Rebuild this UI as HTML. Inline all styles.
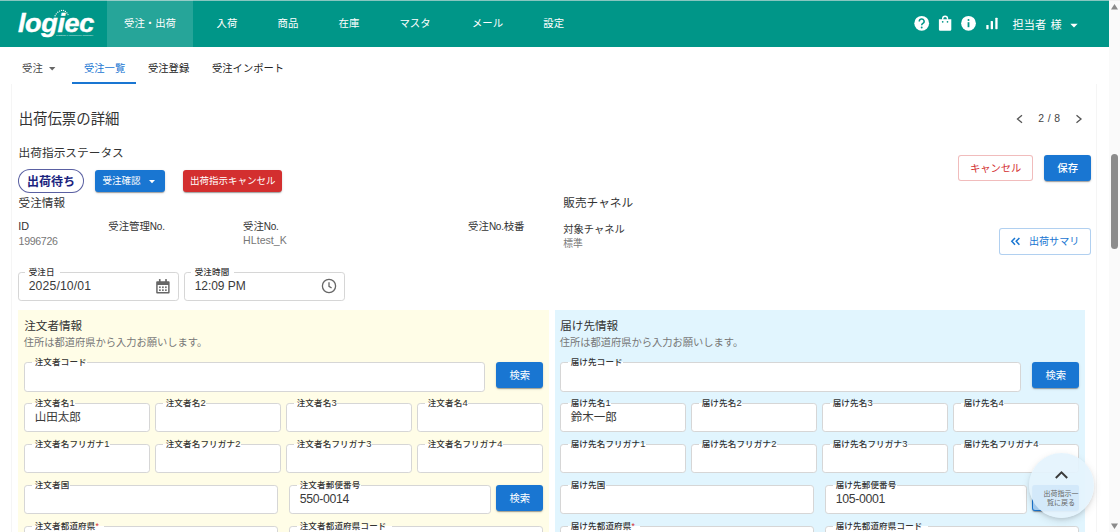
<!DOCTYPE html><html lang="ja"><head><meta charset="utf-8"><title>出荷伝票の詳細</title><style>
html,body{margin:0;padding:0;}
body{width:1120px;height:532px;overflow:hidden;position:relative;background:#fff;
 font-family:"Liberation Sans","Noto Sans CJK JP",sans-serif;color:#333;-webkit-font-smoothing:antialiased;}
.a{position:absolute;}
.t{position:absolute;white-space:nowrap;height:20px;line-height:20px;}
.c{text-align:center;}
.box{position:absolute;box-sizing:border-box;border:1px solid #d6d6d6;border-radius:3.2px;background:#fff;}
.lb{position:absolute;white-space:nowrap;height:12px;line-height:12px;font-size:8.5px;font-weight:500;color:#333;padding:0 .5px 0 2.5px;letter-spacing:.18px}
.btn{position:absolute;box-sizing:border-box;border-radius:3px;color:#fff;text-align:center;white-space:nowrap;font-weight:500;}
.blue{background:#1976d2;box-shadow:0 2px 1px -1px rgba(0,0,0,.2),0 1px 1px 0 rgba(0,0,0,.14),0 1px 3px 0 rgba(0,0,0,.12);}
.red{background:#d32f2f;box-shadow:0 2px 1px -1px rgba(0,0,0,.2),0 1px 1px 0 rgba(0,0,0,.14),0 1px 3px 0 rgba(0,0,0,.12);}
</style></head><body>
<div class="a" style="left:1109px;top:0;width:11px;height:532px;background:#fafafa"></div>
<div class="a" style="left:1111px;top:153.5px;width:7px;height:95.3px;border-radius:3.5px;background:#8c8c8c"></div>
<svg class="a" style="left:1109px;top:0" width="11" height="532"><path d="M2 9.5 L5.5 4 L9 9.5 Z" fill="#8a8a8a"/><path d="M2 523.5 L5.5 529 L9 523.5 Z" fill="#8a8a8a"/></svg>
<div class="a" style="left:0;top:0;width:1109px;height:47px;background:#009688"></div>
<div class="a" style="left:107px;top:0;width:86px;height:47px;background:rgba(255,255,255,.15)"></div>
<div class="a" style="left:0;top:0;width:1120px;height:1px;background:rgba(232,232,232,.58)"></div>
<div class="a" id="logo" style="left:18px;top:6.6px;width:78px;height:32px;color:#fff;font-weight:700;font-style:italic;font-size:25.6px;line-height:32px;letter-spacing:-.4px;-webkit-text-stroke:.4px #fff;transform-origin:0 0;transform:scaleX(1.06)">logiec</div>
<svg class="a" style="left:50px;top:8px" width="50" height="32" viewBox="50 8 50 32"><g fill="#fff" opacity=".92"><circle cx="55.1" cy="15.7" r=".68"/><circle cx="56.25" cy="13.9" r=".68"/><circle cx="57.8" cy="12.3" r=".68"/><circle cx="59.6" cy="11.1" r=".68"/><circle cx="61.6" cy="10.4" r=".68"/><circle cx="63.6" cy="10.5" r=".68"/><circle cx="65.4" cy="11.4" r=".68"/><circle cx="66.9" cy="12.9" r=".68"/><circle cx="68" cy="14.6" r=".68"/></g><text x="56" y="36.1" font-size="2.5" fill="#fff" opacity=".85" textLength="37.5" lengthAdjust="spacingAndGlyphs" font-family="Liberation Sans, sans-serif">logistics e-commerce company</text></svg>
<div class="t c" style="left:50px;width:200px;top:13.5px;font-size:10.4px;color:#fff;font-weight:400;">受注・出荷</div>
<div class="t c" style="left:127px;width:200px;top:13.5px;font-size:10.4px;color:#fff;font-weight:400;">入荷</div>
<div class="t c" style="left:188px;width:200px;top:13.5px;font-size:10.4px;color:#fff;font-weight:400;">商品</div>
<div class="t c" style="left:249px;width:200px;top:13.5px;font-size:10.4px;color:#fff;font-weight:400;">在庫</div>
<div class="t c" style="left:315px;width:200px;top:13.5px;font-size:10.4px;color:#fff;font-weight:400;">マスタ</div>
<div class="t c" style="left:387.5px;width:200px;top:13.5px;font-size:10.4px;color:#fff;font-weight:400;">メール</div>
<div class="t c" style="left:453.70000000000005px;width:200px;top:13.5px;font-size:10.4px;color:#fff;font-weight:400;">設定</div>
<svg class="a" style="left:910px;top:12px" width="95" height="24" viewBox="0 0 95 24">
<g fill="#fff">
<circle cx="11.7" cy="11.3" r="7.4"/>
<path d="M28.9 7.3 h12.4 v10.1 a1.3 1.3 0 0 1 -1.3 1.3 h-9.8 a1.3 1.3 0 0 1 -1.3 -1.3 z"/>
<circle cx="58.5" cy="11.3" r="7.4"/>
<rect x="76.3" y="13" width="2.3" height="4.2" rx=".6"/><rect x="80.7" y="9" width="2.3" height="8.2" rx=".6"/><rect x="85.3" y="5.7" width="2.3" height="11.5" rx=".6"/>
</g>
<path d="M32.7 7.8 v-1.2 a2.4 2.4 0 0 1 4.8 0 v1.2" fill="none" stroke="#fff" stroke-width="1.4"/>
<circle cx="32.7" cy="9.8" r=".85" fill="#009688"/><circle cx="37.5" cy="9.8" r=".85" fill="#009688"/>
<path d="M9.3 9.4 a2.4 2.4 0 1 1 3.6 2 c-.8 .5 -1.2 .9 -1.2 1.9" fill="none" stroke="#009688" stroke-width="1.5"/>
<circle cx="11.7" cy="15.5" r=".95" fill="#009688"/>
<rect x="57.6" y="10.2" width="1.8" height="5" fill="#009688"/><circle cx="58.5" cy="7.9" r="1" fill="#009688"/>
</svg>
<div class="t " style="left:1012.5px;top:14.899999999999999px;font-size:11.2px;color:#fff;font-weight:400;word-spacing:1.3px">担当者 様</div>
<svg class="a" style="left:1070px;top:22.6px" width="8" height="5"><path d="M0.3 0.8 L7.7 0.8 L4 4.6 Z" fill="#fff"/></svg>
<div class="a" style="left:0;top:47px;width:1109px;height:37px;background:#fff"></div>
<div class="t " style="left:22px;top:58.5px;font-size:10.4px;color:#444;font-weight:400;">受注</div>
<svg class="a" style="left:49px;top:66.5px" width="7" height="4"><path d="M0 0 L6.4 0 L3.2 3.4 Z" fill="#666"/></svg>
<div class="t " style="left:84px;top:58.5px;font-size:10.3px;color:#1976d2;font-weight:400;">受注一覧</div>
<div class="a" style="left:72px;top:82.4px;width:64px;height:1.6px;background:#1976d2"></div>
<div class="t " style="left:148px;top:58.5px;font-size:10.3px;color:#222;font-weight:400;">受注登録</div>
<div class="t " style="left:212px;top:58.5px;font-size:10.3px;color:#222;font-weight:400;">受注インポート</div>
<div class="a" style="left:11px;top:84px;width:1086px;height:460px;background:#fff;box-sizing:border-box;border-left:1px solid #f5f5f5;border-right:1px solid #f5f5f5"></div>
<div class="t " style="left:18.7px;top:109.2px;font-size:14.4px;color:#333;font-weight:400;">出荷伝票の詳細</div>
<svg class="a" style="left:1014px;top:112px" width="72" height="14"><g fill="none" stroke="#555" stroke-width="1.3"><path d="M8 3.3 L3.5 7 L8 10.7"/><path d="M62.5 3.3 L67 7 L62.5 10.7"/></g></svg>
<div class="t " style="left:1038.3px;top:108.6px;font-size:10.4px;color:#444;font-weight:400;letter-spacing:3.6px">2/8</div>
<div class="t " style="left:18.6px;top:143px;font-size:11.7px;color:#333;font-weight:400;">出荷指示ステータス</div>
<div class="a" style="left:18px;top:169px;width:66px;height:24px;box-sizing:border-box;border:1px solid rgba(26,35,126,.72);border-radius:12px;background:#fff"></div>
<div class="t c" style="left:-49px;width:200px;top:172px;font-size:12px;color:#1a237e;font-weight:700;">出荷待ち</div>
<div class="btn blue" style="left:95px;top:170px;width:70px;height:21.5px"></div>
<div class="t " style="left:102.6px;top:170.6px;font-size:9.5px;color:#fff;font-weight:400;">受注確認</div>
<svg class="a" style="left:149px;top:179.5px" width="7" height="4"><path d="M0 0 L6 0 L3 3.2 Z" fill="#fff"/></svg>
<div class="btn red" style="left:183px;top:170px;width:99px;height:21.5px"></div>
<div class="t " style="left:190.1px;top:170.6px;font-size:9.5px;color:#fff;font-weight:400;">出荷指示キャンセル</div>
<div class="btn" style="left:958px;top:155px;width:74.5px;height:26.4px;border:1px solid rgba(211,47,47,.32);background:#fff"></div>
<div class="t c" style="left:895.7px;width:200px;top:158.7px;font-size:10.3px;color:#d32f2f;font-weight:400;">キャンセル</div>
<div class="btn blue" style="left:1044px;top:155px;width:47px;height:26.2px"></div>
<div class="t c" style="left:967.7px;width:200px;top:158.7px;font-size:10.4px;color:#fff;font-weight:500;">保存</div>
<div class="t " style="left:18.6px;top:192.9px;font-size:11.6px;color:#333;font-weight:400;">受注情報</div>
<div class="t " style="left:563.2px;top:192.5px;font-size:11.7px;color:#333;font-weight:400;">販売チャネル</div>
<div class="t " style="left:18.3px;top:215.8px;font-size:10.8px;color:#333;font-weight:400;">ID</div>
<div class="t " style="left:108.3px;top:216.9px;font-size:10.4px;color:#333;font-weight:400;">受注管理<span style="font-size:10px;letter-spacing:-.25px">No.</span></div>
<div class="t " style="left:243px;top:216.9px;font-size:10.4px;color:#333;font-weight:400;">受注<span style="font-size:10px;letter-spacing:-.25px">No.</span></div>
<div class="t " style="left:468.1px;top:217px;font-size:10.4px;color:#333;font-weight:400;">受注<span style="font-size:10px;letter-spacing:-.25px">No.</span>枝番</div>
<div class="t " style="left:563.2px;top:220.2px;font-size:10.3px;color:#333;font-weight:400;">対象チャネル</div>
<div class="t " style="left:18.6px;top:230.6px;font-size:10.6px;color:#777;font-weight:400;letter-spacing:-.33px">1996726</div>
<div class="t " style="left:243.1px;top:230.4px;font-size:10.6px;color:#777;font-weight:400;letter-spacing:.02px">HLtest_K</div>
<div class="t " style="left:563.2px;top:233.9px;font-size:9.8px;color:#777;font-weight:400;">標準</div>
<div class="btn" style="left:999px;top:228px;width:92px;height:26.5px;border:1px solid rgba(25,118,210,.34);background:#fff"></div>
<svg class="a" style="left:1010px;top:236px" width="11" height="10"><g fill="none" stroke="#1976d2" stroke-width="1.5"><path d="M5 1.9 L1.8 5.3 L5 8.7"/><path d="M9.4 1.9 L6.2 5.3 L9.4 8.7"/></g></svg>
<div class="t " style="left:1028.9px;top:231.6px;font-size:10.1px;color:#1976d2;font-weight:400;">出荷サマリ</div>
<div class="box" style="left:18px;top:272px;width:161px;height:29px"></div>
<div class="lb" style="left:24.7px;top:265.8px;padding:0 5px 0 4px;background:linear-gradient(to bottom,#fff 0,#fff 6.2px,#fff 6.2px,#fff 100%)">受注日</div>
<div class="t " style="left:28.7px;top:276.2px;font-size:12.2px;color:#3a3a3a;font-weight:400;letter-spacing:.15px">2025/10/01</div>
<div class="box" style="left:184px;top:272px;width:161px;height:29px"></div>
<div class="lb" style="left:190.7px;top:265.8px;padding:0 5px 0 4px;background:linear-gradient(to bottom,#fff 0,#fff 6.2px,#fff 6.2px,#fff 100%)">受注時間</div>
<div class="t " style="left:194.7px;top:276.2px;font-size:12px;color:#3a3a3a;font-weight:400;letter-spacing:-.05px">12:09 PM</div>
<svg class="a" style="left:155.8px;top:278px" width="13.8" height="17" viewBox="0 0 15 17" preserveAspectRatio="none"><g fill="#666">
<path d="M1.2 3.2 h12.6 a1 1 0 0 1 1 1 v10.4 a1 1 0 0 1 -1 1 h-12.6 a1 1 0 0 1 -1 -1 v-10.4 a1 1 0 0 1 1 -1 z M1.8 7 v7 h11.4 v-7 z"/>
<rect x="3.2" y="1" width="1.8" height="3.4" rx=".6"/><rect x="10" y="1" width="1.8" height="3.4" rx=".6"/>
<rect x="3.4" y="8.4" width="1.7" height="1.7"/><rect x="6.65" y="8.4" width="1.7" height="1.7"/><rect x="9.9" y="8.4" width="1.7" height="1.7"/>
<rect x="3.4" y="11.3" width="1.7" height="1.7"/><rect x="6.65" y="11.3" width="1.7" height="1.7"/><rect x="9.9" y="11.3" width="1.7" height="1.7"/>
</g></svg>
<svg class="a" style="left:321px;top:278.3px" width="16" height="16" viewBox="0 0 16 16"><circle cx="8" cy="8" r="6.6" fill="none" stroke="#666" stroke-width="1.3"/><path d="M8 4.2 V8.3 L10.6 10" fill="none" stroke="#666" stroke-width="1.3"/></svg>
<div class="a" style="left:18px;top:310px;width:530.6px;height:240px;background:#fffde7"></div>
<div class="a" style="left:555px;top:310px;width:530.2px;height:240px;background:#e1f5fe"></div>
<div class="t " style="left:24.2px;top:315.5px;font-size:11.6px;color:#333;font-weight:400;">注文者情報</div>
<div class="t " style="left:23.8px;top:333px;font-size:10.25px;color:#777;font-weight:400;">住所は都道府県から入力お願いします。</div>
<div class="box" style="left:24px;top:362px;width:461px;height:30px"></div>
<div class="lb" style="left:32.2px;top:355.8px;background:linear-gradient(to bottom,#fffde7 0,#fffde7 6.2px,#fff 6.2px,#fff 100%)">注文者コード</div>
<div class="btn blue" style="left:496.4px;top:362.2px;width:46.6px;height:26.2px"></div>
<div class="t c" style="left:419.69999999999993px;width:200px;top:365.9px;font-size:10.3px;color:#fff;font-weight:400;">検索</div>
<div class="box" style="left:24px;top:403px;width:126px;height:29px"></div>
<div class="lb" style="left:32.2px;top:396.8px;background:linear-gradient(to bottom,#fffde7 0,#fffde7 6.2px,#fff 6.2px,#fff 100%)">注文者名<span style="font-size:9.4px;letter-spacing:-.3px">1</span></div>
<div class="t " style="left:34.7px;top:406.7px;font-size:11.5px;color:#3a3a3a;font-weight:400;">山田太郎</div>
<div class="box" style="left:24px;top:444px;width:126px;height:29px"></div>
<div class="lb" style="left:32.2px;top:437.8px;background:linear-gradient(to bottom,#fffde7 0,#fffde7 6.2px,#fff 6.2px,#fff 100%)">注文者名フリガナ<span style="font-size:9.4px;letter-spacing:-.3px">1</span></div>
<div class="box" style="left:155px;top:403px;width:126px;height:29px"></div>
<div class="lb" style="left:163.2px;top:396.8px;background:linear-gradient(to bottom,#fffde7 0,#fffde7 6.2px,#fff 6.2px,#fff 100%)">注文者名<span style="font-size:9.4px;letter-spacing:-.3px">2</span></div>
<div class="box" style="left:155px;top:444px;width:126px;height:29px"></div>
<div class="lb" style="left:163.2px;top:437.8px;background:linear-gradient(to bottom,#fffde7 0,#fffde7 6.2px,#fff 6.2px,#fff 100%)">注文者名フリガナ<span style="font-size:9.4px;letter-spacing:-.3px">2</span></div>
<div class="box" style="left:286px;top:403px;width:126px;height:29px"></div>
<div class="lb" style="left:294.2px;top:396.8px;background:linear-gradient(to bottom,#fffde7 0,#fffde7 6.2px,#fff 6.2px,#fff 100%)">注文者名<span style="font-size:9.4px;letter-spacing:-.3px">3</span></div>
<div class="box" style="left:286px;top:444px;width:126px;height:29px"></div>
<div class="lb" style="left:294.2px;top:437.8px;background:linear-gradient(to bottom,#fffde7 0,#fffde7 6.2px,#fff 6.2px,#fff 100%)">注文者名フリガナ<span style="font-size:9.4px;letter-spacing:-.3px">3</span></div>
<div class="box" style="left:417px;top:403px;width:126px;height:29px"></div>
<div class="lb" style="left:425.2px;top:396.8px;background:linear-gradient(to bottom,#fffde7 0,#fffde7 6.2px,#fff 6.2px,#fff 100%)">注文者名<span style="font-size:9.4px;letter-spacing:-.3px">4</span></div>
<div class="box" style="left:417px;top:444px;width:126px;height:29px"></div>
<div class="lb" style="left:425.2px;top:437.8px;background:linear-gradient(to bottom,#fffde7 0,#fffde7 6.2px,#fff 6.2px,#fff 100%)">注文者名フリガナ<span style="font-size:9.4px;letter-spacing:-.3px">4</span></div>
<div class="box" style="left:24px;top:485px;width:254px;height:29px"></div>
<div class="lb" style="left:32.2px;top:478.8px;background:linear-gradient(to bottom,#fffde7 0,#fffde7 6.2px,#fff 6.2px,#fff 100%)">注文者国</div>
<div class="box" style="left:289px;top:485px;width:202px;height:29px"></div>
<div class="lb" style="left:297.2px;top:478.8px;background:linear-gradient(to bottom,#fffde7 0,#fffde7 6.2px,#fff 6.2px,#fff 100%)">注文者郵便番号</div>
<div class="t " style="left:299.7px;top:488.7px;font-size:12.3px;color:#3a3a3a;font-weight:400;letter-spacing:-.32px">550-0014</div>
<div class="btn blue" style="left:496.4px;top:485px;width:46.6px;height:26px"></div>
<div class="t c" style="left:419.69999999999993px;width:200px;top:488.5px;font-size:10.3px;color:#fff;font-weight:400;">検索</div>
<div class="box" style="left:24px;top:526px;width:254px;height:29px"></div>
<div class="lb" style="left:32.2px;top:519.8px;padding:0 5px 0 2.5px;background:linear-gradient(to bottom,#fffde7 0,#fffde7 6.2px,#fff 6.2px,#fff 100%)">注文者都道府県<span style="color:#d32f2f">*</span></div>
<div class="box" style="left:289px;top:526px;width:254px;height:29px"></div>
<div class="lb" style="left:297.2px;top:519.8px;padding:0 5px 0 2.5px;background:linear-gradient(to bottom,#fffde7 0,#fffde7 6.2px,#fff 6.2px,#fff 100%)">注文者都道府県コード</div>
<div class="t " style="left:560.2px;top:315.5px;font-size:11.6px;color:#333;font-weight:400;">届け先情報</div>
<div class="t " style="left:559.8px;top:333px;font-size:10.25px;color:#777;font-weight:400;">住所は都道府県から入力お願いします。</div>
<div class="box" style="left:560px;top:362px;width:461px;height:30px"></div>
<div class="lb" style="left:568.2px;top:355.8px;background:linear-gradient(to bottom,#e1f5fe 0,#e1f5fe 6.2px,#fff 6.2px,#fff 100%)">届け先コード</div>
<div class="btn blue" style="left:1032.4px;top:362.2px;width:46.6px;height:26.2px"></div>
<div class="t c" style="left:955.7px;width:200px;top:365.9px;font-size:10.3px;color:#fff;font-weight:400;">検索</div>
<div class="box" style="left:560px;top:403px;width:126px;height:29px"></div>
<div class="lb" style="left:568.2px;top:396.8px;background:linear-gradient(to bottom,#e1f5fe 0,#e1f5fe 6.2px,#fff 6.2px,#fff 100%)">届け先名<span style="font-size:9.4px;letter-spacing:-.3px">1</span></div>
<div class="t " style="left:570.7px;top:406.7px;font-size:11.5px;color:#3a3a3a;font-weight:400;">鈴木一郎</div>
<div class="box" style="left:560px;top:444px;width:126px;height:29px"></div>
<div class="lb" style="left:568.2px;top:437.8px;background:linear-gradient(to bottom,#e1f5fe 0,#e1f5fe 6.2px,#fff 6.2px,#fff 100%)">届け先名フリガナ<span style="font-size:9.4px;letter-spacing:-.3px">1</span></div>
<div class="box" style="left:691px;top:403px;width:126px;height:29px"></div>
<div class="lb" style="left:699.2px;top:396.8px;background:linear-gradient(to bottom,#e1f5fe 0,#e1f5fe 6.2px,#fff 6.2px,#fff 100%)">届け先名<span style="font-size:9.4px;letter-spacing:-.3px">2</span></div>
<div class="box" style="left:691px;top:444px;width:126px;height:29px"></div>
<div class="lb" style="left:699.2px;top:437.8px;background:linear-gradient(to bottom,#e1f5fe 0,#e1f5fe 6.2px,#fff 6.2px,#fff 100%)">届け先名フリガナ<span style="font-size:9.4px;letter-spacing:-.3px">2</span></div>
<div class="box" style="left:822px;top:403px;width:126px;height:29px"></div>
<div class="lb" style="left:830.2px;top:396.8px;background:linear-gradient(to bottom,#e1f5fe 0,#e1f5fe 6.2px,#fff 6.2px,#fff 100%)">届け先名<span style="font-size:9.4px;letter-spacing:-.3px">3</span></div>
<div class="box" style="left:822px;top:444px;width:126px;height:29px"></div>
<div class="lb" style="left:830.2px;top:437.8px;background:linear-gradient(to bottom,#e1f5fe 0,#e1f5fe 6.2px,#fff 6.2px,#fff 100%)">届け先名フリガナ<span style="font-size:9.4px;letter-spacing:-.3px">3</span></div>
<div class="box" style="left:953px;top:403px;width:126px;height:29px"></div>
<div class="lb" style="left:961.2px;top:396.8px;background:linear-gradient(to bottom,#e1f5fe 0,#e1f5fe 6.2px,#fff 6.2px,#fff 100%)">届け先名<span style="font-size:9.4px;letter-spacing:-.3px">4</span></div>
<div class="box" style="left:953px;top:444px;width:126px;height:29px"></div>
<div class="lb" style="left:961.2px;top:437.8px;background:linear-gradient(to bottom,#e1f5fe 0,#e1f5fe 6.2px,#fff 6.2px,#fff 100%)">届け先名フリガナ<span style="font-size:9.4px;letter-spacing:-.3px">4</span></div>
<div class="box" style="left:560px;top:485px;width:254px;height:29px"></div>
<div class="lb" style="left:568.2px;top:478.8px;background:linear-gradient(to bottom,#e1f5fe 0,#e1f5fe 6.2px,#fff 6.2px,#fff 100%)">届け先国</div>
<div class="box" style="left:825px;top:485px;width:202px;height:29px"></div>
<div class="lb" style="left:833.2px;top:478.8px;background:linear-gradient(to bottom,#e1f5fe 0,#e1f5fe 6.2px,#fff 6.2px,#fff 100%)">届け先郵便番号</div>
<div class="t " style="left:835.7px;top:488.7px;font-size:12.3px;color:#3a3a3a;font-weight:400;letter-spacing:-.32px">105-0001</div>
<div class="btn blue" style="left:1032.4px;top:485px;width:46.6px;height:26px"></div>
<div class="t c" style="left:955.7px;width:200px;top:488.5px;font-size:10.3px;color:#fff;font-weight:400;">検索</div>
<div class="box" style="left:560px;top:526px;width:254px;height:29px"></div>
<div class="lb" style="left:568.2px;top:519.8px;padding:0 5px 0 2.5px;background:linear-gradient(to bottom,#e1f5fe 0,#e1f5fe 6.2px,#fff 6.2px,#fff 100%)">届け先都道府県<span style="color:#d32f2f">*</span></div>
<div class="box" style="left:825px;top:526px;width:254px;height:29px"></div>
<div class="lb" style="left:833.2px;top:519.8px;padding:0 5px 0 2.5px;background:linear-gradient(to bottom,#e1f5fe 0,#e1f5fe 6.2px,#fff 6.2px,#fff 100%)">届け先都道府県コード</div>
<div class="a" style="left:1029px;top:453px;width:65px;height:65px;border-radius:50%;background:rgba(228,243,253,.93);box-shadow:0 2px 4px -1px rgba(0,0,0,.14),0 3px 8px 0 rgba(0,0,0,.10)"></div>
<svg class="a" style="left:1054px;top:470px" width="15" height="10"><path d="M1.8 8 L7.5 2.4 L13.2 8" fill="none" stroke="#3a3a3a" stroke-width="2"/></svg>
<div class="a" style="left:1033px;top:485px;width:46px;height:25.4px;background:rgba(210,232,250,.75);border-radius:2px"></div>
<div class="a c" style="left:1036px;top:490px;width:50px;font-size:7px;line-height:8.8px;color:#666;white-space:nowrap">出荷指示一<br>覧に戻る</div>
</body></html>
